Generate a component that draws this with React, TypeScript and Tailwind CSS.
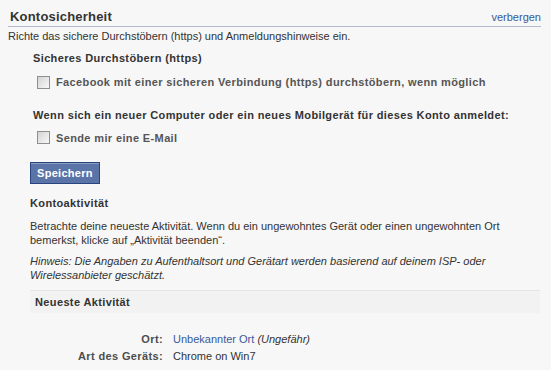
import React from "react";

const FONT = "font-['Liberation_Sans',Arial,sans-serif]";

function Check({ label }: { label: string }) {
  return (
    <label className="flex items-center gap-[6px] pl-[29px]">
      <span className="w-[13px] h-[13px] border border-[#8f8f8f] bg-gradient-to-br from-[#d4d4d4] to-[#f8f8f8] shrink-0" />
      <span className="font-bold text-[#555] text-[11px] tracking-[0.37px]">{label}</span>
    </label>
  );
}

export default function App() {
  return (
    <div className={`${FONT} w-[551px] h-[370px] bg-[#f7f7f7] text-[11px] text-[#333] overflow-hidden`}>
      <div className="pl-[8px] pr-[10px] pt-[9px]">
        {/* Header */}
        <div className="flex items-end justify-between border-b border-[#b4bbcd] pb-[1px] pl-[2px]">
          <h2 className="text-[13px] font-bold text-[#333] leading-[16px] tracking-[0.2px]">Kontosicherheit</h2>
          <a className="text-[#3b5998] leading-[16px]">verbergen</a>
        </div>
        <p className="mt-[2px] leading-[14px]">Richte das sichere Durchstöbern (https) und Anmeldungshinweise ein.</p>

        <div className="pl-[25px] mt-[8px]">
          <h3 className="font-bold leading-[14px] tracking-[0.37px]">Sicheres Durchstöbern (https)</h3>
        </div>
        <div className="mt-[9px]">
          <Check label="Facebook mit einer sicheren Verbindung (https) durchstöbern, wenn möglich" />
        </div>

        <div className="pl-[25px] mt-[17px]">
          <h3 className="font-bold leading-[14px] tracking-[0.37px]">Wenn sich ein neuer Computer oder ein neues Mobilgerät für dieses Konto anmeldet:</h3>
        </div>
        <div className="mt-[8px]">
          <Check label="Sende mir eine E-Mail" />
        </div>

        <div className="pl-[22px] mt-[16px]">
          <button className="bg-[#5b74a8] border border-[#29447e] text-white font-bold text-[11px] tracking-[0.3px] px-[6px] h-[22px] leading-[20px] shadow-[inset_0_1px_0_#8a9cc2]">
            Speichern
          </button>
        </div>

        <div className="pl-[22px]">
          <h3 className="font-bold mt-[12px] leading-[14px] tracking-[0.37px]">Kontoaktivität</h3>
          <p className="mt-[9px] leading-[14px]">
            Betrachte deine neueste Aktivität. Wenn du ein ungewohntes Gerät oder einen ungewohnten Ort
            <br />
            bemerkst, klicke auf „Aktivität beenden“.
          </p>
          <p className="mt-[7px] leading-[14px] italic">
            Hinweis: Die Angaben zu Aufenthaltsort und Gerätart werden basierend auf deinem ISP- oder
            <br />
            Wirelessanbieter geschätzt.
          </p>

          <div className="mt-[8px] mr-[1px] bg-[#f2f2f2] border-t border-[#e5e5e5] h-[23px] flex items-center pl-[5px]">
            <span className="font-bold tracking-[0.37px]">Neueste Aktivität</span>
          </div>

          <div className="mt-[19px] grid grid-cols-[133px_1fr] gap-x-[10px] gap-y-[3px] leading-[14px]">
            <span className="text-right font-bold text-[#4d4d4d] tracking-[0.37px]">Ort:</span>
            <span>
              <a className="text-[#3b5998]">Unbekannter Ort</a> <i>(Ungefähr)</i>
            </span>
            <span className="text-right font-bold text-[#4d4d4d] tracking-[0.37px]">Art des Geräts:</span>
            <span>Chrome on Win7</span>
          </div>
        </div>
      </div>
    </div>
  );
}
